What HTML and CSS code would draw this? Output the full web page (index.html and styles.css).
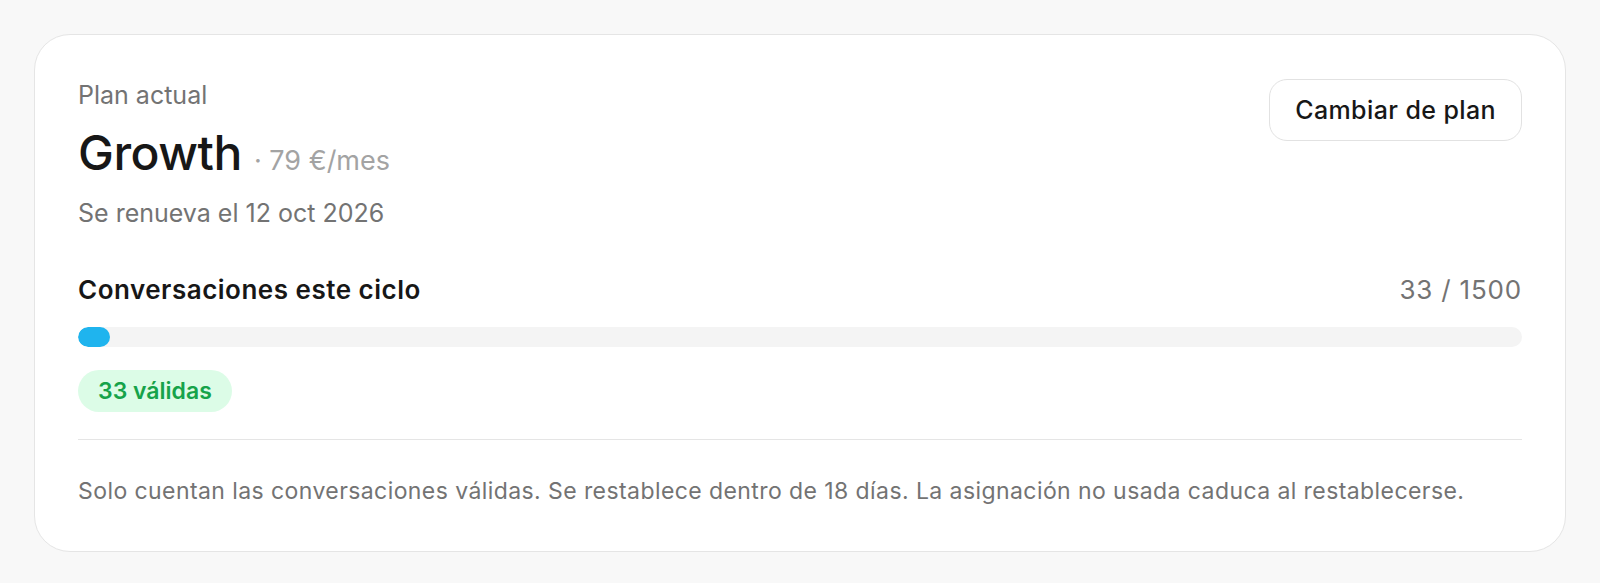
FILE: index.html
```html
<!DOCTYPE html>
<html lang="es">
<head>
    <meta charset="UTF-8">
    <meta name="viewport" content="width=device-width, initial-scale=1.0">
    <title>Plan actual</title>
    <link rel="stylesheet" href="styles.css">
</head>
<body>
    <div class="plan-card">
        <!-- Plan header -->
        <div class="plan-head">
            <div class="plan-info">
                <div class="plan-label">Plan actual</div>
                <div class="plan-name">Growth<span class="plan-price">· 79 €/mes</span></div>
                <div class="plan-renew">Se renueva el 12 oct 2026</div>
            </div>
            <button class="plan-button">Cambiar de plan</button>
        </div>

        <!-- Usage -->
        <div class="usage-row">
            <span class="usage-title">Conversaciones este ciclo</span>
            <span class="usage-count">33 / 1500</span>
        </div>
        <div class="usage-bar">
            <div class="usage-fill" style="width: 2.2%;"></div>
        </div>
        <span class="usage-badge">33 válidas</span>

        <div class="plan-divider"></div>

        <p class="plan-note">Solo cuentan las conversaciones válidas. Se restablece dentro de 18 días. La asignación no usada caduca al restablecerse.</p>
    </div>
</body>
</html>
```

FILE: styles.css
```css
/* Page */
body {
    margin: 0;
    padding: 34px;
    background-color: #f8f8f8;
    font-family: Inter, "Noto Sans", sans-serif;
    color: #171717;
}

/* Card */
.plan-card {
    background-color: #ffffff;
    border: 1px solid #e5e5e5;
    border-radius: 36px;
    padding: 42px 43px 43px;
}

.plan-head {
    display: flex;
    justify-content: space-between;
    align-items: flex-start;
}

.plan-label {
    font-size: 25px;
    line-height: 36px;
    color: #737373;
}

.plan-name {
    margin-top: 11px;
    font-size: 48px;
    line-height: 58px;
    font-weight: 500;
    letter-spacing: -0.01em;
}

.plan-price {
    margin-left: 12px;
    font-size: 27px;
    font-weight: 400;
    letter-spacing: 0;
    color: #a3a3a3;
}

.plan-renew {
    margin-top: 5px;
    font-size: 25px;
    line-height: 36px;
    color: #737373;
}

.plan-button {
    margin-top: 2px;
    height: 62px;
    padding: 0 25px;
    background-color: #ffffff;
    border: 1px solid #e2e2e2;
    border-radius: 18px;
    font-family: inherit;
    font-size: 25px;
    font-weight: 500;
    letter-spacing: 0.4px;
    color: #171717;
    cursor: pointer;
}

/* Usage */
.usage-row {
    display: flex;
    justify-content: space-between;
    margin-top: 41px;
    font-size: 26px;
    line-height: 36px;
}

.usage-title {
    font-weight: 600;
    letter-spacing: 0.5px;
}

.usage-count {
    color: #737373;
    letter-spacing: 0.8px;
}

.usage-bar {
    margin-top: 19px;
    height: 20px;
    border-radius: 10px;
    background-color: #f4f4f4;
    overflow: hidden;
}

.usage-fill {
    height: 100%;
    border-radius: 10px;
    background-color: #1fb4ee;
}

.usage-badge {
    display: inline-block;
    margin-top: 23px;
    height: 42px;
    padding: 0 20px;
    border-radius: 21px;
    background-color: #dcfce7;
    color: #16a34a;
    font-size: 23px;
    line-height: 42px;
    font-weight: 600;
}

.plan-divider {
    margin-top: 27px;
    height: 1px;
    background-color: #e5e5e5;
}

.plan-note {
    margin: 34px 0 0;
    font-size: 23px;
    line-height: 34px;
    letter-spacing: 0.42px;
    color: #737373;
}
```
